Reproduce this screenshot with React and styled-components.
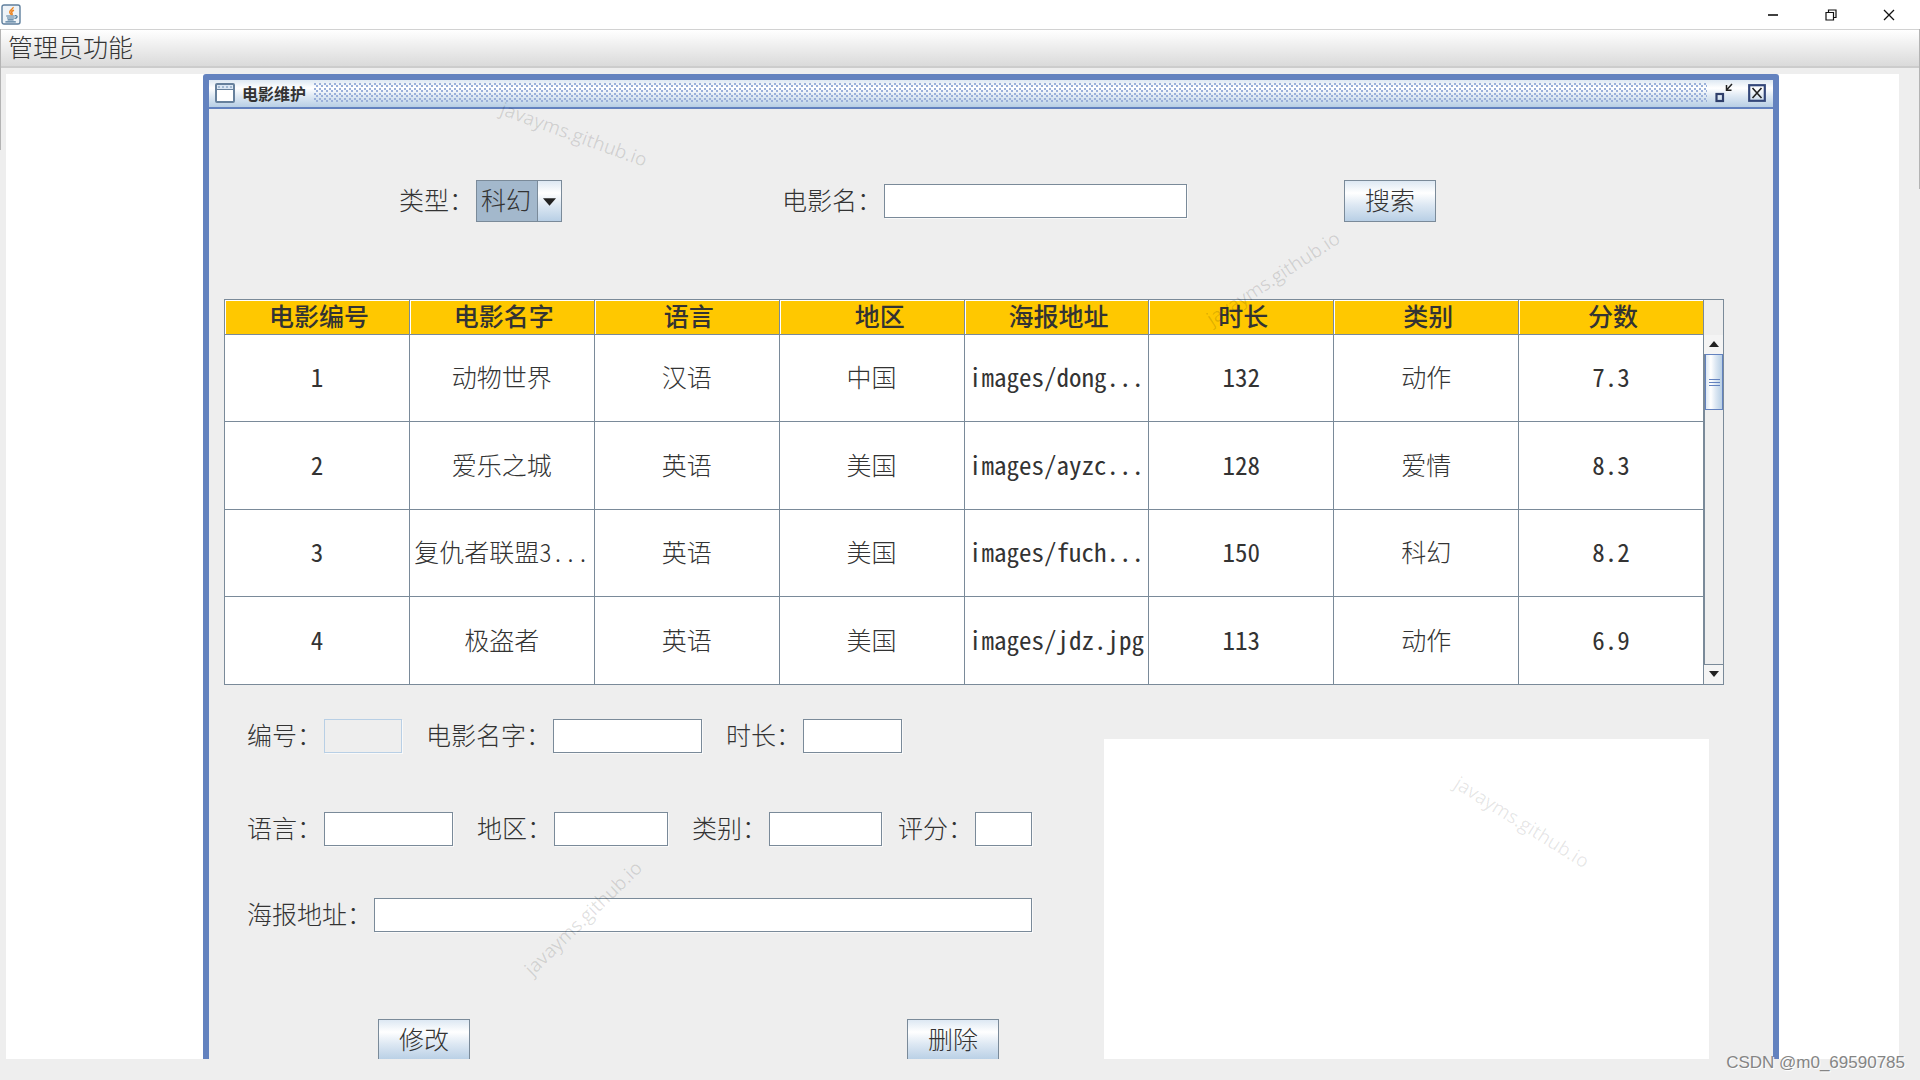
import styled, { createGlobalStyle } from "styled-components";

const columns = ["电影编号", "电影名字", "语言", " 地区", "海报地址", "时长", "类别", "分数"];

const movies = [
  ["1", "动物世界", "汉语", "中国", "images/dong...", "132", "动作", "7.3"],
  ["2", "爱乐之城", "英语", "美国", "images/ayzc...", "128", "爱情", "8.3"],
  ["3", "复仇者联盟3...", "英语", "美国", "images/fuch...", "150", "科幻", "8.2"],
  ["4", "极盗者", "英语", "美国", "images/jdz.jpg", "113", "动作", "6.9"],
];

const watermarks = [
  { x: 574, y: 134, angle: 20, alpha: 0.13 },
  { x: 1273, y: 278, angle: -33, alpha: 0.13 },
  { x: 583, y: 918, angle: -44, alpha: 0.13 },
  { x: 1522, y: 822, angle: 32, alpha: 0.1 },
];

// latin text and digits look too thin in the light weight
const isLatin = (value) => /^[\x20-\x7e]+$/.test(value);

function TextField({ id, label, width, disabled }) {
  return (
    <Field>
      <Label htmlFor={id}>{label}</Label>
      <Input id={id} type="text" $width={width} disabled={disabled} />
    </Field>
  );
}

function JavaIcon() {
  return (
    <svg width="20" height="21" viewBox="0 0 20 21" fill="none">
      <rect x="1" y="1" width="18" height="19" rx="2" fill="#eef3f8" stroke="#5f7f9d" strokeWidth="1.4" />
      <path d="M12.200 3c.4 2.200-4.400 3.400-3.400 5.600.3.800 1 1.200 1 2.200M13 6.200c-2.400.9-2.800 2-2 3 .6.8.1 1.500-.5 2" stroke="#ee8420" strokeWidth="1.500" />
      <path d="M5.200 12h8.600M6 14h7.400M6.600 15.800h6M4.400 17.800h10.400" stroke="#4d7899" strokeWidth="1.200" />
      <path d="M14 11.800c3.200-.6 2.600 2.400-.4 2.600" stroke="#4d7899" strokeWidth="1.200" />
    </svg>
  );
}

function FrameIcon() {
  return (
    <svg width="20" height="20" viewBox="0 0 20 20" fill="none">
      <rect x="1" y="1" width="18" height="18" rx="1" fill="#fff" stroke="#66809c" strokeWidth="2" />
      <path d="M2 2h16v4H2z" fill="#dbe7f4" />
      <path d="M3 4h14" stroke="#6f8fb4" strokeDasharray="2 2" />
      <path d="M2 6.500h16" stroke="#66809c" />
    </svg>
  );
}

function ShrinkIcon() {
  return (
    <svg width="18" height="20" viewBox="0 0 18 20" fill="none">
      <rect x="1.500" y="11" width="6.500" height="7" stroke="#2f3f6b" strokeWidth="2.200" />
      <path d="M17 1l-5 5.500M11.500 2v5.200H16.500" stroke="#222" strokeWidth="1.500" />
    </svg>
  );
}

function CloseFrameIcon() {
  return (
    <svg width="18" height="18" viewBox="0 0 18 18" fill="none">
      <rect x="1.200" y="1.200" width="15.600" height="15.600" stroke="#33477a" strokeWidth="2.200" />
      <path d="M4.500 4l9 10M13.500 4l-9 10" stroke="#222" strokeWidth="1.600" />
    </svg>
  );
}

function App() {
  return (
    <Shell>
      <GlobalStyle />
      <TitleBar>
        <JavaIcon />
        <WindowButtons>
          <WindowButton aria-label="最小化">
            <svg width="12" height="12" viewBox="0 0 12 12" stroke="#111">
              <path d="M1 6h10" strokeWidth="1.600" />
            </svg>
          </WindowButton>
          <WindowButton aria-label="还原">
            <svg width="12" height="12" viewBox="0 0 12 12" fill="none" stroke="#111" strokeWidth="1.200">
              <path d="M1 3.500h7.500v7.500H1zM3.500 3.500V1H11v7.500H8.500" />
            </svg>
          </WindowButton>
          <WindowButton aria-label="关闭">
            <svg width="12" height="12" viewBox="0 0 12 12" stroke="#111" strokeWidth="1.300">
              <path d="M1 1l10 10M11 1L1 11" />
            </svg>
          </WindowButton>
        </WindowButtons>
      </TitleBar>
      <MenuBar>
        <MenuButton>管理员功能</MenuButton>
      </MenuBar>
      <Desktop>
        <Frame>
          <FrameHeader>
            <FrameIcon />
            <FrameTitle>电影维护</FrameTitle>
            <Bumps />
            <FrameButton aria-label="缩小">
              <ShrinkIcon />
            </FrameButton>
            <FrameButton aria-label="关闭窗口">
              <CloseFrameIcon />
            </FrameButton>
          </FrameHeader>
          <Content>
            <SearchRow>
              <Field>
                <Label htmlFor="type">类型：</Label>
                <ComboBox>
                  <Select id="type" defaultValue="科幻">
                    <option>科幻</option>
                    <option>动作</option>
                    <option>爱情</option>
                  </Select>
                  <ComboArrow viewBox="0 0 14 8">
                    <path d="M0 0h14L7 8z" />
                  </ComboArrow>
                </ComboBox>
              </Field>
              <NameSearch>
                <TextField id="keyword" label="电影名：" width={303} />
              </NameSearch>
              <Button>搜索</Button>
            </SearchRow>

            <TablePane>
              <Table>
                <thead>
                  <tr>
                    {columns.map((name) => (
                      <Th key={name}>{name}</Th>
                    ))}
                  </tr>
                </thead>
                <tbody>
                  {movies.map((movie) => (
                    <Row key={movie[0]}>
                      {movie.map((value, i) => (
                        <Td key={i} $latin={isLatin(value)}>
                          {value}
                        </Td>
                      ))}
                    </Row>
                  ))}
                </tbody>
              </Table>
              <ScrollSide>
                <Corner />
                <ScrollButton aria-label="向上滚动">
                  <svg width="10" height="6" viewBox="0 0 10 6">
                    <path d="M0 6h10L5 0z" fill="#222" />
                  </svg>
                </ScrollButton>
                <Track>
                  <Thumb>
                    <Grip />
                  </Thumb>
                </Track>
                <ScrollButton aria-label="向下滚动">
                  <svg width="10" height="6" viewBox="0 0 10 6">
                    <path d="M0 0h10L5 6z" fill="#222" />
                  </svg>
                </ScrollButton>
              </ScrollSide>
            </TablePane>

            <Bottom>
              <Form>
                <FormRow>
                  <TextField id="no" label="编号：" width={78} disabled />
                  <TextField id="name" label="电影名字：" width={149} />
                  <TextField id="duration" label="时长：" width={99} />
                </FormRow>
                <FormRow>
                  <TextField id="language" label="语言：" width={129} />
                  <TextField id="area" label="地区：" width={114} />
                  <TextField id="category" label="类别：" width={113} />
                  <Tight>
                    <TextField id="score" label="评分：" width={57} />
                  </Tight>
                </FormRow>
                <FormRow>
                  <TextField id="poster" label="海报地址：" width={658} />
                </FormRow>
                <ButtonRow>
                  <Button>修改</Button>
                  <Button>删除</Button>
                </ButtonRow>
              </Form>
              <Poster />
            </Bottom>
          </Content>
        </Frame>
      </Desktop>
      {watermarks.map((mark) => (
        <Watermark
          key={mark.x}
          $alpha={mark.alpha}
          style={{
            left: mark.x,
            top: mark.y,
            transform: `translate(-50%, -50%) rotate(${mark.angle}deg)`,
          }}
        >
          javayms.github.io
        </Watermark>
      ))}
      <Credit>CSDN @m0_69590785</Credit>
    </Shell>
  );
}

export default App;

const oceanGradient = "#dde8f3, #ffffff 30%, #dde8f3 60%, #b8cfe5";

const GlobalStyle = createGlobalStyle`
  * {
    box-sizing: border-box;
  }
  body {
    margin: 0;
    background-color: #eeeeee;
  }
  button, input, select, table {
    font: inherit;
    color: inherit;
  }
`;

const Shell = styled.div`
  position: relative;
  display: flex;
  flex-direction: column;
  height: 100vh;
  overflow: hidden;
  background-color: #eeeeee;
  color: #333333;
  font-family: "Noto Sans CJK SC", sans-serif;
  font-size: 25px;
  font-weight: 300;
  font-feature-settings: "hwid";
  line-height: 34px;

  /* window edges */
  &::before,
  &::after {
    content: "";
    position: absolute;
    top: 29px;
    width: 1px;
    background-color: #b4b4b4;
  }
  &::before {
    left: 0;
    height: 121px;
  }
  &::after {
    right: 0;
    height: 160px;
  }
`;

const TitleBar = styled.header`
  display: flex;
  flex: none;
  align-items: center;
  justify-content: space-between;
  height: 29px;
  padding: 0 2px 0 1px;
  background-color: #ffffff;
`;

const WindowButtons = styled.div`
  display: flex;
`;

const WindowButton = styled.button`
  display: flex;
  align-items: center;
  justify-content: center;
  width: 58px;
  height: 28px;
  padding: 0;
  border: none;
  background: none;
`;

const MenuBar = styled.nav`
  display: flex;
  flex: none;
  align-items: center;
  height: 39px;
  padding: 0 0 4px 8px;
  border-top: 1px solid #d2d2d2;
  border-bottom: 2px solid #cccccc;
  background: linear-gradient(#ffffff, #dadada);
`;

const MenuButton = styled.button`
  padding: 0;
  border: none;
  background: none;
  line-height: 30px;
`;

const Desktop = styled.main`
  flex: 1;
  min-height: 0;
  margin: 6px 21px 21px 6px;
  padding: 0 120px 0 197px;
  overflow: hidden;
  background-color: #ffffff;
`;

const Frame = styled.section`
  border: 6px solid #6382bf;
  border-radius: 3px;
  background-color: #eeeeee;
`;

const FrameHeader = styled.div`
  display: flex;
  align-items: center;
  height: 29px;
  padding: 0 7px 2px 6px;
  border-bottom: 2px solid #6382bf;
  background: linear-gradient(${oceanGradient});
`;

const FrameTitle = styled.h1`
  margin: 0 8px 0 7px;
  font-size: 16px;
  font-weight: 700;
  line-height: 24px;
`;

const Bumps = styled.div`
  flex: 1;
  height: 20px;
  margin-right: 8px;
  background-image: radial-gradient(circle at 1px 1px, #9ab0da 1px, transparent 1px),
    radial-gradient(circle at 3px 3px, #9ab0da 1px, transparent 1px);
  background-size: 5px 5px;
`;

const FrameButton = styled.button`
  display: flex;
  padding: 0;
  border: none;
  background: none;

  & + & {
    margin-left: 15px;
  }
`;

const Content = styled.div`
  padding: 71px 49px 20px 15px;
`;

const SearchRow = styled.div`
  display: flex;
  align-items: center;
  padding-left: 175px;
`;

const Field = styled.div`
  display: flex;
  align-items: center;
  gap: 2px;
`;

const NameSearch = styled.div`
  margin: 0 157px 0 220px;
`;

const Label = styled.label`
  padding-bottom: 4px;
  line-height: 30px;
  white-space: nowrap;
`;

const Input = styled.input`
  width: ${(props) => props.$width}px;
  height: 34px;
  padding: 0 4px;
  border: 1px solid #7a8a99;
  border-radius: 0;
  outline: none;
  background-color: #ffffff;
  box-shadow: 1px 1px 0 #f9f9f9;

  &:disabled {
    border-color: #b8cfe5;
    background-color: #eeeeee;
  }
`;

const ComboBox = styled.div`
  position: relative;
  display: flex;
`;

const Select = styled.select`
  width: 86px;
  height: 42px;
  padding: 0 0 4px 4px;
  border: 1px solid #7a8a99;
  border-radius: 0;
  appearance: none;
  background: linear-gradient(#7a8a99, #7a8a99) right 23px top / 1px 100% no-repeat,
    linear-gradient(${oceanGradient}) right / 23px 100% no-repeat, #a3b8cc;
`;

const ComboArrow = styled.svg`
  position: absolute;
  top: 18px;
  right: 6px;
  width: 13px;
  height: 8px;
  fill: #222222;
  pointer-events: none;
`;

const Button = styled.button`
  width: 92px;
  height: 42px;
  padding: 0 0 4px;
  border: 1px solid #7a8a99;
  background: linear-gradient(${oceanGradient});
  line-height: 30px;
`;

const TablePane = styled.div`
  display: flex;
  margin-top: 77px;
  border: 1px solid #7a8a99;
`;

const Table = styled.table`
  flex: 1;
  width: 100%;
  table-layout: fixed;
  border-collapse: separate;
  border-spacing: 0;
  background-color: #ffffff;
`;

const Th = styled.th`
  height: 35px;
  padding: 0 0 4px 4px;
  border-right: 1px solid #7a8a99;
  border-bottom: 1px solid #7a8a99;
  background-color: #ffc800;
  box-shadow: inset 1px 1px 0 #ffffff;
  font-weight: 500;
  line-height: 30px;
  white-space: pre;
`;

const Row = styled.tr`
  height: 87px;

  &:nth-child(2) {
    height: 88px;
  }

  &:last-child td {
    border-bottom: none;
  }
`;

const Td = styled.td`
  padding: 0 0 4px;
  border-right: 1px solid #7a8a99;
  border-bottom: 1px solid #7a8a99;
  font-weight: ${(props) => (props.$latin ? 400 : 300)};
  text-align: center;
  white-space: nowrap;
`;

const ScrollSide = styled.div`
  display: flex;
  flex-direction: column;
  flex: none;
  width: 19px;
`;

const Corner = styled.div`
  height: 35px;
`;

const ScrollButton = styled.button`
  display: flex;
  align-items: center;
  justify-content: center;
  height: 19px;
  padding: 0 0 2px;
  border: none;
  background-color: #f4f4f4;
`;

const Track = styled.div`
  flex: 1;
  border-left: 1px solid #7a8a99;
  border-bottom: 1px solid #7a8a99;
`;

const Thumb = styled.div`
  display: flex;
  align-items: center;
  justify-content: center;
  height: 56px;
  border: 1px solid #6382bf;
  background: linear-gradient(to right, ${oceanGradient});
`;

const Grip = styled.span`
  width: 11px;
  height: 7px;
  border: solid #6382bf;
  border-width: 1px 0;
  background: linear-gradient(#6382bf, #6382bf) center / 100% 1px no-repeat;
`;

const Bottom = styled.div`
  display: flex;
  margin-top: 34px;
`;

const Form = styled.form`
  display: flex;
  flex-direction: column;
  flex: none;
  gap: 52px;
  padding-left: 23px;
`;

const FormRow = styled.div`
  display: flex;
  gap: 24px;

  &:first-child {
    margin-bottom: 7px;
  }
`;

const Tight = styled.div`
  margin-left: -8px;
`;

const ButtonRow = styled.div`
  display: flex;
  gap: 437px;
  margin-top: 35px;
  padding-left: 131px;
`;

const Poster = styled.div`
  flex: 1;
  height: 400px;
  margin: 20px 15px 0 72px;
  background-color: #ffffff;
`;

const Watermark = styled.span`
  position: absolute;
  color: rgba(0, 0, 0, ${(props) => props.$alpha});
  font-family: "Open Sans", sans-serif;
  font-size: 19px;
  font-weight: 400;
  line-height: 24px;
  white-space: nowrap;
  pointer-events: none;
`;

const Credit = styled.span`
  position: absolute;
  right: 15px;
  bottom: 6px;
  color: #858585;
  font-family: "Liberation Sans", sans-serif;
  font-size: 17px;
  font-weight: 400;
  line-height: 22px;
  text-shadow: 1px 1px 0 #ffffff;
`;
